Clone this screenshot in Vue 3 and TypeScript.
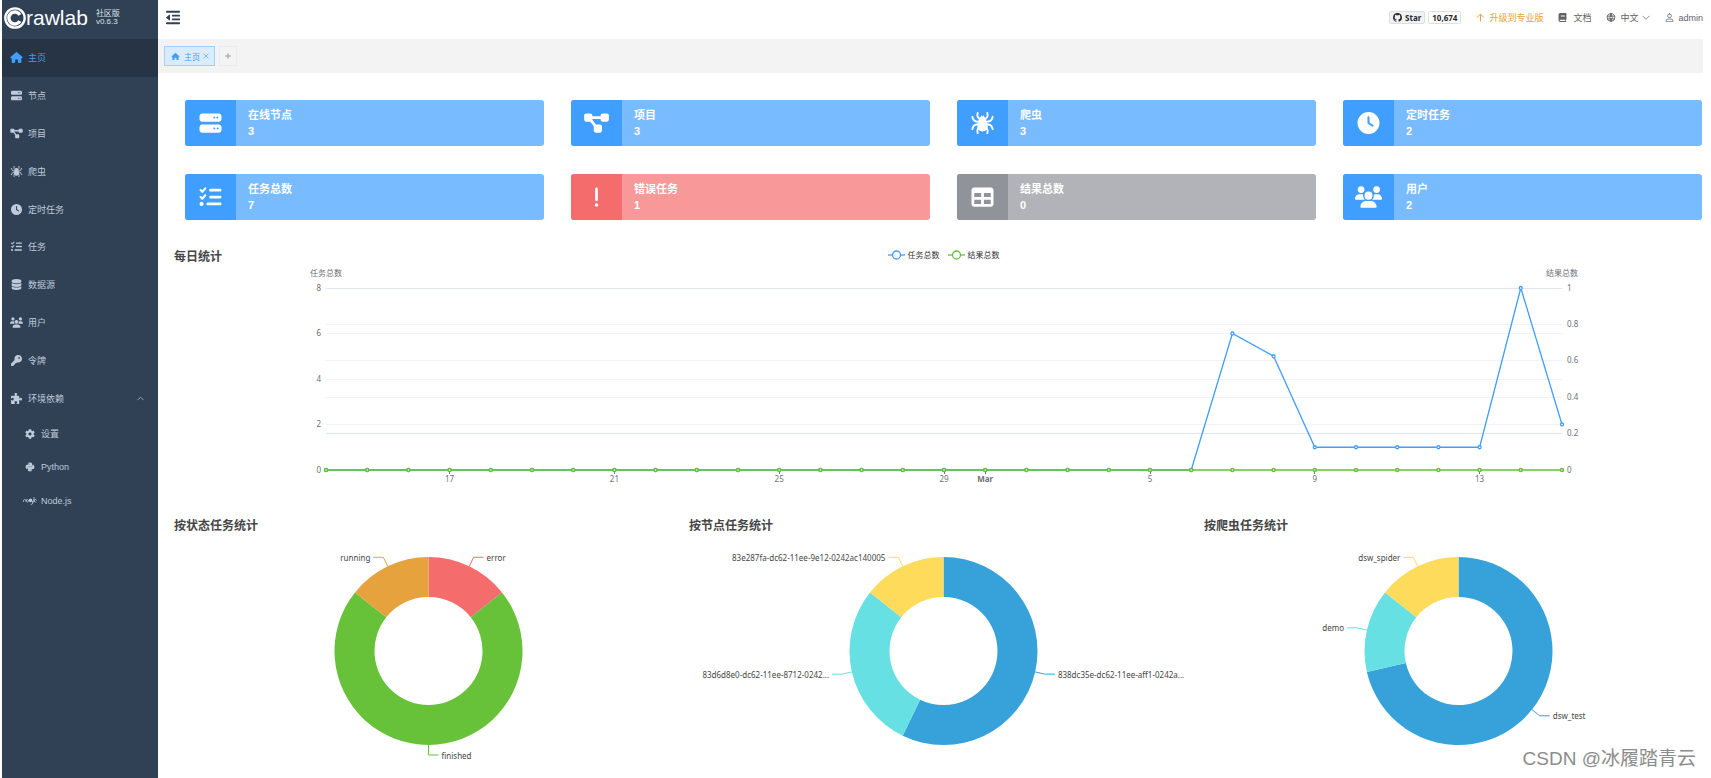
<script setup lang="ts">
import { computed, h, onBeforeUnmount, onMounted, ref } from 'vue'

interface Glyph {
  box: string
  fill?: string
  stroke?: string
  width?: number
}

const glyphs: Record<string, Glyph> = {
  home: { box: '0 0 576 512', fill: 'M575.8 255.5c0 18-15 32.1-32 32.1h-32l.7 160.2c0 2.7-.2 5.4-.5 8.1V472c0 22.1-17.9 40-40 40H456c-1.1 0-2.2 0-3.3-.1c-1.4 .1-2.8 .1-4.2 .1H416 392c-22.1 0-40-17.9-40-40V448 384c0-17.7-14.3-32-32-32H256c-17.7 0-32 14.3-32 32v64 24c0 22.1-17.9 40-40 40H160 128.1c-1.5 0-3-.1-4.5-.2c-1.2 .1-2.4 .2-3.6 .2H104c-22.1 0-40-17.9-40-40V360c0-.9 0-1.9 .1-2.8V287.6H32c-18 0-32-14-32-32.1c0-9 3-17 10-24L266.4 8c7-7 15-8 22-8s15 2 21 7L564.8 231.5c8 7 12 15 11 24z' },
  server: { box: '0 0 512 512', fill: 'M64 32C28.7 32 0 60.7 0 96v64c0 35.3 28.7 64 64 64H448c35.3 0 64-28.7 64-64V96c0-35.3-28.7-64-64-64H64zm280 72a24 24 0 1 1 0 48 24 24 0 1 1 0-48zm48 24a24 24 0 1 1 48 0 24 24 0 1 1 -48 0zM64 288c-35.3 0-64 28.7-64 64v64c0 35.3 28.7 64 64 64H448c35.3 0 64-28.7 64-64V352c0-35.3-28.7-64-64-64H64zm280 72a24 24 0 1 1 0 48 24 24 0 1 1 0-48zm56 24a24 24 0 1 1 48 0 24 24 0 1 1 -48 0z' },
  project: { box: '0 0 576 512', fill: 'M0 80C0 53.5 21.5 32 48 32h96c26.5 0 48 21.5 48 48V96H384V80c0-26.5 21.5-48 48-48h96c26.5 0 48 21.5 48 48v96c0 26.5-21.5 48-48 48H432c-26.5 0-48-21.5-48-48V160H192v16c0 1.7-.1 3.4-.3 5L272 288h96c26.5 0 48 21.5 48 48v96c0 26.5-21.5 48-48 48H272c-26.5 0-48-21.5-48-48V336c0-1.7 .1-3.4 .3-5L144 224H48c-26.5 0-48-21.5-48-48V80z' },
  spider: {
    box: '0 0 512 512',
    fill: 'M256 452c-78 0-122-52-122-112 0-40 18-70 42-90-8-16-12-30-12-50 0-44 26-76 52-92l8-32 32 26 32-26 8 32c26 16 52 48 52 92 0 20-4 34-12 50 24 20 42 50 42 90 0 60-44 112-122 112z',
    stroke: 'M212 190L150 120Q128 92 144 20M300 190L362 120Q384 92 368 20M196 236L96 216Q36 196 20 112M316 236L416 216Q476 196 492 112M190 274L96 296Q36 316 20 400M322 274L416 296Q476 316 492 400M204 330L150 392Q128 420 144 492M308 330L362 392Q384 420 368 492',
    width: 44,
  },
  clock: { box: '0 0 512 512', fill: 'M256 0a256 256 0 1 1 0 512A256 256 0 1 1 256 0zM232 120V256c0 8 4 15.5 10.7 20l96 64c11 7.4 25.9 4.4 33.3-6.7s4.4-25.9-6.7-33.3L280 243.2V120c0-13.3-10.7-24-24-24s-24 10.7-24 24z' },
  tasks: { box: '0 0 512 512', fill: 'M152.1 38.2c9.9 8.9 10.7 24 1.8 33.9l-72 80c-4.4 4.9-10.6 7.8-17.2 7.9s-12.9-2.4-17.6-7L7 113C-2.3 103.6-2.3 88.4 7 79s24.6-9.4 33.9 0l22.1 22.1 55.1-61.2c8.9-9.9 24-10.7 33.9-1.8zm0 160c9.9 8.9 10.7 24 1.8 33.9l-72 80c-4.4 4.9-10.6 7.8-17.2 7.9s-12.9-2.4-17.6-7L7 273c-9.4-9.4-9.4-24.6 0-33.9s24.6-9.4 33.9 0l22.1 22.1 55.1-61.2c8.9-9.9 24-10.7 33.9-1.8zM224 96c0-17.7 14.3-32 32-32H480c17.7 0 32 14.3 32 32s-14.3 32-32 32H256c-17.7 0-32-14.3-32-32zm0 160c0-17.7 14.3-32 32-32H480c17.7 0 32 14.3 32 32s-14.3 32-32 32H256c-17.7 0-32-14.3-32-32zM160 416c0-17.7 14.3-32 32-32H480c17.7 0 32 14.3 32 32s-14.3 32-32 32H192c-17.7 0-32-14.3-32-32zM48 368a48 48 0 1 1 0 96 48 48 0 1 1 0-96z' },
  exclamation: { box: '0 0 128 512', fill: 'M96 64c0-17.7-14.3-32-32-32S32 46.3 32 64V320c0 17.7 14.3 32 32 32s32-14.3 32-32V64zM64 480a40 40 0 1 0 0-80 40 40 0 1 0 0 80z' },
  table: { box: '0 0 512 512', fill: 'M64 256V160H224v96H64zm0 64H224v96H64V320zm224 96V320H448v96H288zM448 256H288V160H448v96zM64 32C28.7 32 0 60.7 0 96V416c0 35.3 28.7 64 64 64H448c35.3 0 64-28.7 64-64V96c0-35.3-28.7-64-64-64H64z' },
  users: { box: '0 0 640 512', fill: 'M144 0a80 80 0 1 1 0 160A80 80 0 1 1 144 0zM512 0a80 80 0 1 1 0 160A80 80 0 1 1 512 0zM0 298.7C0 239.8 47.8 192 106.7 192h42.7c15.9 0 31 3.5 44.6 9.7c-1.3 7.2-1.9 14.7-1.9 22.3c0 38.2 16.8 72.5 43.3 96c-.2 0-.4 0-.7 0H21.3C9.6 320 0 310.4 0 298.7zM405.3 320c-.2 0-.4 0-.7 0c26.6-23.5 43.3-57.8 43.3-96c0-7.6-.7-15-1.9-22.3c13.6-6.3 28.7-9.7 44.6-9.7h42.7C592.2 192 640 239.8 640 298.7c0 11.8-9.6 21.3-21.3 21.3H405.3zM224 224a96 96 0 1 1 192 0 96 96 0 1 1 -192 0zM128 485.3C128 411.7 187.7 352 261.3 352H378.7C452.3 352 512 411.7 512 485.3c0 14.7-11.9 26.7-26.7 26.7H154.7c-14.7 0-26.7-11.9-26.7-26.7z' },
  key: { box: '0 0 512 512', fill: 'M336 352c97.2 0 176-78.8 176-176S433.2 0 336 0S160 78.8 160 176c0 18.7 2.9 36.8 8.3 53.7L7 391c-4.5 4.5-7 10.6-7 17v80c0 13.3 10.7 24 24 24h80c13.3 0 24-10.7 24-24V448h40c13.3 0 24-10.7 24-24V384h40c6.4 0 12.5-2.5 17-7l33.3-33.3c16.9 5.4 35 8.3 53.7 8.3zM376 96a40 40 0 1 1 0 80 40 40 0 1 1 0-80z' },
  database: { box: '0 0 448 512', fill: 'M448 80v48c0 44.2-100.3 80-224 80S0 172.2 0 128V80C0 35.8 100.3 0 224 0S448 35.8 448 80zM393.2 214.7c20.8-7.4 39.9-16.9 54.8-28.6V288c0 44.2-100.3 80-224 80S0 332.2 0 288V186.1c14.9 11.8 34 21.2 54.8 28.6C99.7 230.7 159.5 240 224 240s124.3-9.3 169.2-25.3zM0 346.1c14.9 11.8 34 21.2 54.8 28.6C99.7 390.7 159.5 400 224 400s124.3-9.3 169.2-25.3c20.8-7.4 39.9-16.9 54.8-28.6V432c0 44.2-100.3 80-224 80S0 476.2 0 432V346.1z' },
  puzzle: { box: '0 0 512 512', fill: 'M192 104.8c0-9.2-5.8-17.3-13.2-22.8C167.2 73.3 160 61.3 160 48c0-26.5 28.7-48 64-48s64 21.5 64 48c0 13.3-7.2 25.3-18.8 34c-7.4 5.5-13.2 13.6-13.2 22.8c0 12.8 10.4 23.2 23.2 23.2H336c26.5 0 48 21.5 48 48v56.8c0 12.8 10.4 23.2 23.2 23.2c9.2 0 17.3-5.8 22.8-13.2c8.7-11.6 20.7-18.8 34-18.8c26.5 0 48 28.7 48 64s-21.5 64-48 64c-13.3 0-25.3-7.2-34-18.8c-5.5-7.4-13.6-13.2-22.8-13.2c-12.8 0-23.2 10.4-23.2 23.2V464c0 26.5-21.5 48-48 48H279.2c-12.8 0-23.2-10.4-23.2-23.2c0-9.2 5.8-17.3 13.2-22.8c11.6-8.7 18.8-20.7 18.8-34c0-26.5-28.7-48-64-48s-64 21.5-64 48c0 13.3 7.2 25.3 18.8 34c7.4 5.5 13.2 13.6 13.2 22.8c0 12.8-10.4 23.2-23.2 23.2H48c-26.5 0-48-21.5-48-48V343.2C0 330.4 10.4 320 23.2 320c9.2 0 17.3 5.8 22.8 13.2C54.7 344.8 66.7 352 80 352c26.5 0 48-28.7 48-64s-21.5-64-48-64c-13.3 0-25.3 7.2-34 18.8C40.5 250.2 32.4 256 23.2 256C10.4 256 0 245.6 0 232.8V176c0-26.5 21.5-48 48-48H168.8c12.8 0 23.2-10.4 23.2-23.2z' },
  gear: { box: '0 0 512 512', fill: 'M487.4 315.7l-42.6-24.6c4.3-23.2 4.3-47 0-70.2l42.6-24.6c4.9-2.8 7.1-8.6 5.5-14-11.1-35.6-30-67.8-54.7-94.6-3.8-4.1-10-5.1-14.8-2.3L380.8 110c-17.9-15.4-38.5-27.3-60.8-35.1V25.8c0-5.6-3.9-10.5-9.4-11.7-36.7-8.2-74.3-7.8-109.2 0-5.5 1.2-9.4 6.1-9.4 11.7V75c-22.2 7.9-42.8 19.8-60.8 35.1L88.7 85.5c-4.9-2.8-11-1.9-14.8 2.3-24.7 26.7-43.6 58.9-54.7 94.6-1.7 5.4.6 11.2 5.5 14L67.3 221c-4.3 23.2-4.3 47 0 70.2l-42.6 24.6c-4.9 2.8-7.1 8.6-5.5 14 11.1 35.6 30 67.8 54.7 94.6 3.8 4.1 10 5.1 14.8 2.3l42.6-24.6c17.9 15.4 38.5 27.3 60.8 35.1v49.2c0 5.6 3.9 10.5 9.4 11.7 36.7 8.2 74.3 7.8 109.2 0 5.5-1.2 9.4-6.1 9.4-11.7v-49.2c22.2-7.9 42.8-19.8 60.8-35.1l42.6 24.6c4.9 2.8 11 1.9 14.8-2.3 24.7-26.7 43.6-58.9 54.7-94.6 1.5-5.5-.7-11.3-5.6-14.1zM256 336c-44.1 0-80-35.9-80-80s35.9-80 80-80 80 35.9 80 80-35.9 80-80 80z' },
  python: { box: '0 0 448 512', fill: 'M439.8 200.5c-7.7-30.9-22.3-54.2-53.4-54.2h-40.1v47.4c0 36.8-31.2 67.8-66.8 67.8H172.7c-29.2 0-53.4 25-53.4 54.3v101.8c0 29 25.2 46 53.4 54.3 33.8 9.9 66.3 11.7 106.8 0 26.9-7.8 53.4-23.5 53.4-54.3v-40.7H226.2v-13.6h160.2c31.1 0 42.6-21.7 53.4-54.2 11.2-33.5 10.7-65.7 0-108.6zM286.2 404c11.1 0 20.1 9.1 20.1 20.3 0 11.3-9 20.4-20.1 20.4-11 0-20.1-9.2-20.1-20.4.1-11.3 9.1-20.3 20.1-20.3zM167.8 248.1h106.8c29.7 0 53.4-24.5 53.4-54.3V91.9c0-29-24.4-50.7-53.4-55.6-35.8-5.9-74.7-5.6-106.8.1-45.2 8-53.4 24.7-53.4 55.6v40.7h106.9v13.6h-147c-31.1 0-58.3 18.7-66.8 54.2-9.8 40.7-10.2 66.1 0 108.6 7.6 31.6 25.7 54.2 56.8 54.2H101v-48.8c0-35.3 30.5-66.4 66.8-66.4zm-6.7-142.6c-11.1 0-20.1-9.1-20.1-20.3.1-11.3 9-20.4 20.1-20.4 11 0 20.1 9.2 20.1 20.4s-9 20.3-20.1 20.3z' },
  node: {
    box: '0 0 28 20',
    fill: 'M12 6.500l3-1.700 3 1.700v4.500l-3 1.700-3-1.700z',
    stroke: 'M1 11V8.500l2.500-1.500 2.500 1.500V11M9 7.200l2 1.200v2.400l-2 1.200-2-1.200V8.400zM20 12.500V8.500l2-1.300M22 3v8.500M27 8.500l-2-1.300-2 1.300v2.500l2 1.300M16 17l3-1.500V11',
    width: 1.6,
  },
  outdent: {
    box: '0 0 448 448',
    fill: 'M8 212L114 130Q128 122 128 140V308Q128 326 114 318L8 236Q-6 224 8 212z',
    stroke: 'M24 40H424M216 164H424M216 284H424M24 408H424',
    width: 58,
  },
  github: { box: '0 0 16 16', fill: 'M8 0C3.58 0 0 3.58 0 8c0 3.54 2.29 6.53 5.47 7.59.4.07.55-.17.55-.38 0-.19-.01-.82-.01-1.49-2.01.37-2.53-.49-2.69-.94-.09-.23-.48-.94-.82-1.13-.28-.15-.68-.52-.01-.53.63-.01 1.08.58 1.23.82.72 1.21 1.87.87 2.33.66.07-.52.28-.87.51-1.07-1.78-.2-3.64-.89-3.64-3.95 0-.87.31-1.59.82-2.15-.08-.2-.36-1.02.08-2.12 0 0 .67-.21 2.2.82.64-.18 1.32-.27 2-.27s1.36.09 2 .27c1.53-1.04 2.2-.82 2.2-.82.44 1.1.16 1.92.08 2.12.51.56.82 1.27.82 2.15 0 3.07-1.87 3.75-3.65 3.95.29.25.54.73.54 1.48 0 1.07-.01 1.93-.01 2.2 0 .21.15.46.55.38A8.01 8.01 0 0 0 16 8c0-4.42-3.58-8-8-8z' },
  arrowUp: { box: '0 0 20 20', stroke: 'M10 18V3M3 9.500L10 2.500l7 7', width: 2.2 },
  book: { box: '0 0 448 512', fill: 'M96 0C43 0 0 43 0 96V416c0 53 43 96 96 96H424a24 24 0 0 0 0-48V384a32 32 0 0 0 24-32V32a32 32 0 0 0-32-32zM96 384H384v64H96a32 32 0 0 1 0-64zM128 128H352v32H128zM128 192H352v32H128z' },
  globe: {
    box: '0 0 20 20',
    stroke: 'M10 1.500a8.500 8.500 0 1 1 0 17a8.500 8.500 0 1 1 0-17zM2 7H18M2 13H18M10 1.500Q4 10 10 18.500M10 1.500Q16 10 10 18.500',
    width: 2.2,
  },
  user: { box: '0 0 20 20', stroke: 'M10 2a4.200 4.200 0 1 1 0 8.400a4.200 4.200 0 1 1 0-8.400zM2.500 18.500v-1q0-4 4-4h7q4 0 4 4v1z', width: 1.7 },
  down: { box: '0 0 20 20', stroke: 'M2 6.500l8 8 8-8', width: 1.8 },
  up: { box: '0 0 20 20', stroke: 'M2 14l8-8 8 8', width: 2 },
  close: { box: '0 0 20 20', stroke: 'M3 3l14 14M17 3L3 17', width: 2 },
  plus: { box: '0 0 20 20', stroke: 'M10 2V18M2 10H18', width: 3 },
}

const Icon = (props: { name: string }) => {
  const g = glyphs[props.name]
  return h('svg', { viewBox: g.box, 'aria-hidden': 'true' }, [
    g.fill ? h('path', { d: g.fill, fill: 'currentColor', 'fill-rule': 'evenodd' }) : null,
    g.stroke
      ? h('path', {
          d: g.stroke,
          fill: 'none',
          stroke: 'currentColor',
          'stroke-width': g.width,
          'stroke-linecap': 'round',
          'stroke-linejoin': 'round',
        })
      : null,
  ])
}
Icon.props = ['name']

const menu = [
  { icon: 'home', label: '主页', active: true },
  { icon: 'server', label: '节点' },
  { icon: 'project', label: '项目' },
  { icon: 'spider', label: '爬虫' },
  { icon: 'clock', label: '定时任务' },
  { icon: 'tasks', label: '任务' },
  { icon: 'database', label: '数据源' },
  { icon: 'users', label: '用户' },
  { icon: 'key', label: '令牌' },
  { icon: 'puzzle', label: '环境依赖', open: true },
]

const submenu = [
  { icon: 'gear', label: '设置' },
  { icon: 'python', label: 'Python' },
  { icon: 'node', label: 'Node.js' },
]

const metrics = [
  { icon: 'server', label: '在线节点', value: 3, tone: 'primary' },
  { icon: 'project', label: '项目', value: 3, tone: 'primary' },
  { icon: 'spider', label: '爬虫', value: 3, tone: 'primary' },
  { icon: 'clock', label: '定时任务', value: 2, tone: 'primary' },
  { icon: 'tasks', label: '任务总数', value: 7, tone: 'primary' },
  { icon: 'exclamation', label: '错误任务', value: 1, tone: 'danger' },
  { icon: 'table', label: '结果总数', value: 0, tone: 'info' },
  { icon: 'users', label: '用户', value: 2, tone: 'primary' },
]

const chartsEl = ref<HTMLElement | null>(null)
const chartWidth = ref(1545)
let observer: ResizeObserver | undefined

onMounted(() => {
  if (!chartsEl.value) return
  observer = new ResizeObserver(([entry]) => {
    chartWidth.value = entry.contentRect.width
  })
  observer.observe(chartsEl.value)
})
onBeforeUnmount(() => observer?.disconnect())

// Daily line chart
const TOP = 23
const BOTTOM = 205
const taskCounts = [...Array(22).fill(0), 6, 5, 1, 1, 1, 1, 1, 8, 2] as number[]
const dayLabels: Record<number, string> = { 3: '17', 7: '21', 11: '25', 15: '29', 16: 'Mar', 20: '5', 24: '9', 28: '13' }

const line = computed(() => {
  const left = Math.round(chartWidth.value * 0.1)
  const right = Math.round(chartWidth.value * 0.9)
  const x = (i: number) => left + ((right - left) * i) / (taskCounts.length - 1)
  const y = (ratio: number) => BOTTOM - (BOTTOM - TOP) * ratio
  return {
    left,
    right,
    tasks: taskCounts.map((v, i) => ({ x: x(i), y: y(v / 8) })),
    results: taskCounts.map((_, i) => ({ x: x(i), y: y(0) })),
    leftTicks: [0, 2, 4, 6, 8].map((v) => ({ text: String(v), y: y(v / 8) })),
    rightTicks: [0, 0.2, 0.4, 0.6, 0.8, 1].map((v) => ({ text: String(v), y: y(v), strong: v === 0.2 || v === 1 })),
    days: Object.entries(dayLabels).map(([i, text]) => ({ text, x: x(Number(i)) })),
  }
})

const toPoints = (pts: { x: number; y: number }[]) => pts.map((p) => `${p.x},${p.y}`).join(' ')

// Donut charts
const OUTER = 94
const INNER = 54
const CENTER_Y = 117

interface Slice {
  name: string
  value: number
  color: string
}

const pies: { title: string; slices: Slice[] }[] = [
  {
    title: '按状态任务统计',
    slices: [
      { name: 'error', value: 1, color: '#f56c6c' },
      { name: 'finished', value: 5, color: '#67c23a' },
      { name: 'running', value: 1, color: '#e6a23c' },
    ],
  },
  {
    title: '按节点任务统计',
    slices: [
      { name: '838dc35e-dc62-11ee-aff1-0242a...', value: 4, color: '#37a2da' },
      { name: '83d6d8e0-dc62-11ee-8712-0242...', value: 2, color: '#67e0e3' },
      { name: '83e287fa-dc62-11ee-9e12-0242ac140005', value: 1, color: '#ffdb5c' },
    ],
  },
  {
    title: '按爬虫任务统计',
    slices: [
      { name: 'dsw_test', value: 5, color: '#37a2da' },
      { name: 'demo', value: 1, color: '#67e0e3' },
      { name: 'dsw_spider', value: 1, color: '#ffdb5c' },
    ],
  },
]

const pieCharts = computed(() => {
  const cx = chartWidth.value / 6
  const at = (r: number, turn: number) => {
    const a = turn * Math.PI * 2
    return { x: cx + r * Math.sin(a), y: CENTER_Y - r * Math.cos(a) }
  }
  return pies.map((pie) => {
    const total = pie.slices.reduce((sum, s) => sum + s.value, 0)
    let turn = 0
    const arcs = pie.slices.map((s) => {
      const from = turn
      const to = (turn += s.value / total)
      const large = to - from > 0.5 ? 1 : 0
      const [a, b, c, d] = [at(OUTER, from), at(OUTER, to), at(INNER, to), at(INNER, from)]
      const mid = (from + to) / 2
      const side = mid > 0.501 ? -1 : 1
      const start = at(OUTER, mid)
      const elbow = at(OUTER + 10, mid)
      const end = { x: elbow.x + side * 10, y: elbow.y }
      return {
        ...s,
        path: `M${a.x} ${a.y}A${OUTER} ${OUTER} 0 ${large} 1 ${b.x} ${b.y}L${c.x} ${c.y}A${INNER} ${INNER} 0 ${large} 0 ${d.x} ${d.y}Z`,
        leader: toPoints([start, elbow, end]),
        x: end.x + side * 3,
        y: end.y,
        anchor: side > 0 ? 'start' : 'end',
      }
    })
    return { title: pie.title, arcs }
  })
})
</script>

<template>
  <div class="app">
    <aside class="sidebar">
      <div class="brand">
        <svg class="brand-mark" viewBox="0 0 42 42" aria-hidden="true">
          <circle cx="21" cy="21" r="18.500" fill="none" stroke="#fff" stroke-width="4.500" />
          <path d="M30.500 15a11.500 11.500 0 1 0 0 12" fill="none" stroke="#fff" stroke-width="6.500" />
        </svg>
        <span class="brand-name">rawlab</span>
        <span class="brand-version"><span>社区版</span><span>v0.6.3</span></span>
      </div>
      <nav>
        <ul class="menu">
          <li v-for="item in menu" :key="item.label">
            <a href="#" :class="{ active: item.active }">
              <Icon class="menu-icon" :name="item.icon" />
              <span>{{ item.label }}</span>
              <Icon v-if="item.open" class="menu-arrow" name="up" />
            </a>
          </li>
        </ul>
        <ul class="menu submenu">
          <li v-for="item in submenu" :key="item.label">
            <a href="#">
              <Icon class="menu-icon" :name="item.icon" />
              <span>{{ item.label }}</span>
            </a>
          </li>
        </ul>
      </nav>
    </aside>

    <main class="main">
      <header class="header">
        <button class="plain toggle" type="button" aria-label="Toggle sidebar"><Icon name="outdent" /></button>
        <div class="actions">
          <div class="github">
            <a class="gh-star" href="#"><Icon name="github" />Star</a>
            <a class="gh-count" href="#">10,674</a>
          </div>
          <a class="action upgrade" href="#"><Icon name="arrowUp" />升级到专业版</a>
          <a class="action docs" href="#"><Icon name="book" />文档</a>
          <button class="plain action" type="button"><Icon class="globe" name="globe" />中文<Icon class="caret" name="down" /></button>
          <button class="plain action" type="button"><Icon name="user" />admin</button>
        </div>
      </header>

      <div class="tabs">
        <a class="tab" href="#">
          <Icon class="tab-home" name="home" />
          <span>主页</span>
          <Icon class="tab-close" name="close" />
        </a>
        <button class="plain tab-add" type="button" aria-label="Add tab"><Icon name="plus" /></button>
      </div>

      <section class="metrics">
        <a v-for="m in metrics" :key="m.label" href="#" class="metric" :class="m.tone">
          <span class="metric-icon"><Icon :name="m.icon" /></span>
          <span class="metric-text">
            <span>{{ m.label }}</span>
            <span>{{ m.value }}</span>
          </span>
        </a>
      </section>

      <div ref="chartsEl" class="charts">
        <section>
          <div class="chart-head">
            <h2>每日统计</h2>
            <div class="legend">
              <button class="plain legend-item" type="button">
                <svg class="blue" viewBox="0 0 17 10"><path d="M0 5H17" /><circle cx="8.500" cy="5" r="4" /></svg>任务总数
              </button>
              <button class="plain legend-item" type="button">
                <svg class="green" viewBox="0 0 17 10"><path d="M0 5H17" /><circle cx="8.500" cy="5" r="4" /></svg>结果总数
              </button>
            </div>
          </div>
          <svg class="line-chart" role="img" aria-label="每日统计">
            <text class="axis-name" :x="line.left" y="7" text-anchor="middle">任务总数</text>
            <text class="axis-name" :x="line.right" y="7" text-anchor="middle">结果总数</text>
            <line
              v-for="t in line.leftTicks"
              :key="'l' + t.text"
              class="split"
              :x1="line.left"
              :x2="line.right"
              :y1="t.y"
              :y2="t.y"
            />
            <line
              v-for="t in line.rightTicks"
              :key="'r' + t.text"
              class="split"
              :class="{ strong: t.strong }"
              :x1="line.left"
              :x2="line.right"
              :y1="t.y"
              :y2="t.y"
            />
            <text v-for="t in line.leftTicks" :key="'lt' + t.text" class="tick" :x="line.left - 5" :y="t.y - 1" text-anchor="end">{{ t.text }}</text>
            <text v-for="t in line.rightTicks" :key="'rt' + t.text" class="tick" :x="line.right + 5" :y="t.y - 1">{{ t.text }}</text>
            <g v-for="d in line.days" :key="d.text">
              <line class="day-mark" :x1="d.x" :x2="d.x" :y1="BOTTOM" :y2="BOTTOM + 4" />
              <text class="tick" :class="{ month: d.text === 'Mar' }" :x="d.x" :y="BOTTOM + 8" text-anchor="middle">{{ d.text }}</text>
            </g>
            <g class="series blue">
              <polyline :points="toPoints(line.tasks)" />
              <circle v-for="(p, i) in line.tasks" :key="i" :cx="p.x" :cy="p.y" r="1.5" />
            </g>
            <g class="series green">
              <polyline :points="toPoints(line.results)" />
              <circle v-for="(p, i) in line.results" :key="i" :cx="p.x" :cy="p.y" r="1.5" />
            </g>
          </svg>
        </section>

        <div class="pies">
          <section v-for="pie in pieCharts" :key="pie.title">
            <div class="chart-head"><h2>{{ pie.title }}</h2></div>
            <svg class="pie-chart" role="img" :aria-label="pie.title">
              <g v-for="arc in pie.arcs" :key="arc.name">
                <path :d="arc.path" :fill="arc.color" />
                <polyline class="leader" :points="arc.leader" :stroke="arc.color" />
                <text class="pie-label" :x="arc.x" :y="arc.y" :text-anchor="arc.anchor">{{ arc.name }}</text>
              </g>
            </svg>
          </section>
        </div>
      </div>
    </main>

    <div class="watermark">CSDN @冰履踏青云</div>
  </div>
</template>

<style>
body {
  margin: 0;
  background: #fff;
}
</style>

<style scoped>
.app {
  display: flex;
  position: relative;
  min-height: 100vh;
  box-sizing: border-box;
  padding: 0 8px 0 2px;
  overflow: hidden;
  font-family: "Liberation Sans", "Noto Sans CJK SC", sans-serif;
  font-size: 9px;
}

a {
  color: inherit;
  text-decoration: none;
}

svg {
  display: block;
  flex: none;
}

.plain {
  display: flex;
  align-items: center;
  padding: 0;
  border: 0;
  background: none;
  color: inherit;
  font: inherit;
  cursor: pointer;
}

.sidebar {
  flex: none;
  width: 156px;
  background: #304156;
  color: #bfcbd9;
}

.brand {
  display: flex;
  align-items: center;
  height: 39px;
  box-sizing: border-box;
  padding: 0 0 4px 2px;
  color: #fff;
}

.brand-mark {
  width: 22px;
  height: 22px;
}

.brand-name {
  font-size: 21px;
  line-height: 24px;
}

.brand-version {
  display: flex;
  flex-direction: column;
  margin-left: 8px;
  font-size: 8px;
  line-height: 8px;
  color: #dfe4ea;
}

.menu {
  display: grid;
  grid-auto-rows: 1fr;
  height: 378px;
  margin: 0;
  padding: 0;
  list-style: none;
}

.submenu {
  height: 101px;
}

.menu a {
  display: flex;
  align-items: center;
  gap: 5px;
  height: 100%;
  box-sizing: border-box;
  padding: 0 14px 0 8px;
}

.submenu a {
  gap: 4px;
  padding-left: 21px;
}

.menu a.active {
  background: #263445;
  color: #409eff;
}

.menu-icon {
  width: 13px;
  height: 11px;
}

.submenu .menu-icon {
  width: 14px;
  height: 10px;
}

.menu-arrow {
  width: 7px;
  height: 7px;
  margin-left: auto;
}

.main {
  flex: 1;
  min-width: 0;
}

.header {
  display: flex;
  align-items: center;
  justify-content: space-between;
  height: 39px;
  box-sizing: border-box;
  padding: 0 0 4px 8px;
  color: #606266;
}

.toggle {
  color: #304156;
}

.toggle svg {
  width: 14px;
  height: 15px;
}

.actions {
  display: flex;
  align-items: center;
  gap: 15px;
}

.github {
  display: flex;
  gap: 3px;
  font-family: "Noto Sans", sans-serif;
  font-size: 8px;
  font-weight: 700;
  line-height: 11px;
  color: #24292f;
}

.gh-star,
.gh-count {
  display: flex;
  align-items: center;
  gap: 3px;
  padding: 0 3px;
  border: 1px solid #dcdee0;
  border-radius: 2px;
  background: #f0f2f4;
}

.gh-count {
  background: #fff;
}

.gh-star svg {
  width: 9px;
  height: 9px;
}

.action {
  display: flex;
  align-items: center;
  gap: 4px;
}

.action svg {
  width: 9px;
  height: 9px;
}

.upgrade {
  color: #e6a23c;
}

.docs {
  gap: 6px;
}

.action .globe {
  width: 10px;
}

.action .caret {
  width: 8px;
}

.tabs {
  display: flex;
  align-items: center;
  gap: 4px;
  height: 34px;
  box-sizing: border-box;
  padding: 0 6px;
  background: #f3f3f3;
}

.tab {
  display: flex;
  align-items: center;
  height: 20px;
  box-sizing: border-box;
  padding: 0 5px 0 6px;
  border: 1px solid #a3d0fd;
  background: #d9ecff;
  color: #409eff;
  font-size: 8px;
}

.tab-home {
  width: 9px;
  height: 7px;
  margin-right: 4px;
}

.tab-close {
  width: 6px;
  height: 6px;
  margin-left: 3px;
}

.tab-add {
  justify-content: center;
  width: 18px;
  height: 20px;
  box-sizing: border-box;
  border: 1px solid #ececee;
  background: #f4f4f5;
  color: #909399;
}

.tab-add svg {
  width: 6px;
  height: 6px;
}

.metrics {
  display: grid;
  grid-template-columns: repeat(4, 1fr);
  gap: 28px 27px;
  padding: 27px 1px 29px 27px;
}

.metric {
  display: flex;
  height: 46px;
  border-radius: 3px;
  overflow: hidden;
  color: #fff;
  font-size: 11px;
  font-weight: 700;
  line-height: 16px;
}

.metric-icon {
  display: flex;
  align-items: center;
  justify-content: center;
  width: 51px;
}

.metric-icon svg {
  width: 27px;
  height: 22px;
}

.metric-text {
  flex: 1;
  display: flex;
  flex-direction: column;
  justify-content: center;
  padding-left: 12px;
}

.primary {
  background: #79bbff;
}

.primary .metric-icon {
  background: #409eff;
}

.danger {
  background: #f89898;
}

.danger .metric-icon {
  background: #f56c6c;
}

.info {
  background: #b1b3b8;
}

.info .metric-icon {
  background: #909399;
}

.charts {
  width: 100%;
  margin-left: 13px;
  font-family: "Noto Sans", "Noto Sans CJK SC", sans-serif;
  font-size: 8px;
}

.chart-head {
  display: grid;
  grid-template-columns: 1fr auto 1fr;
  align-items: start;
}

h2 {
  margin: 0;
  padding-left: 3px;
  font-size: 12px;
  font-weight: 700;
  line-height: 16px;
  color: #464646;
  white-space: nowrap;
}

.legend {
  display: flex;
  gap: 8px;
  color: #333;
}

.legend-item {
  gap: 3px;
  line-height: 12px;
}

.legend svg {
  width: 17px;
  height: 10px;
  fill: #fff;
  stroke-width: 1.3;
}

.blue {
  stroke: #409eff;
}

.green {
  stroke: #67c23a;
}

.line-chart {
  width: 100%;
  height: 225px;
}

.line-chart text,
.pie-chart text {
  dominant-baseline: central;
}

.axis-name,
.tick {
  fill: #6e7079;
}

.month {
  font-weight: 700;
}

.split {
  stroke: #f1f3f8;
  shape-rendering: crispEdges;
}

.split.strong {
  stroke: #e0e6f1;
}

.day-mark {
  stroke: #6e7079;
  shape-rendering: crispEdges;
}

.series {
  fill: #fff;
  stroke-width: 1.3;
}

.series.green {
  stroke-width: 1.6;
}

.series polyline {
  fill: none;
}

.pies {
  display: grid;
  grid-template-columns: repeat(3, 1fr);
  padding-top: 28px;
}

.pie-chart {
  width: 100%;
  height: 244px;
}

.leader {
  fill: none;
}

.pie-label {
  fill: #464646;
}

.watermark {
  position: absolute;
  right: 15px;
  bottom: 6px;
  font-family: "Liberation Sans", "Noto Sans CJK SC", sans-serif;
  font-size: 19px;
  line-height: 26px;
  color: #8c8c8c;
}
</style>
